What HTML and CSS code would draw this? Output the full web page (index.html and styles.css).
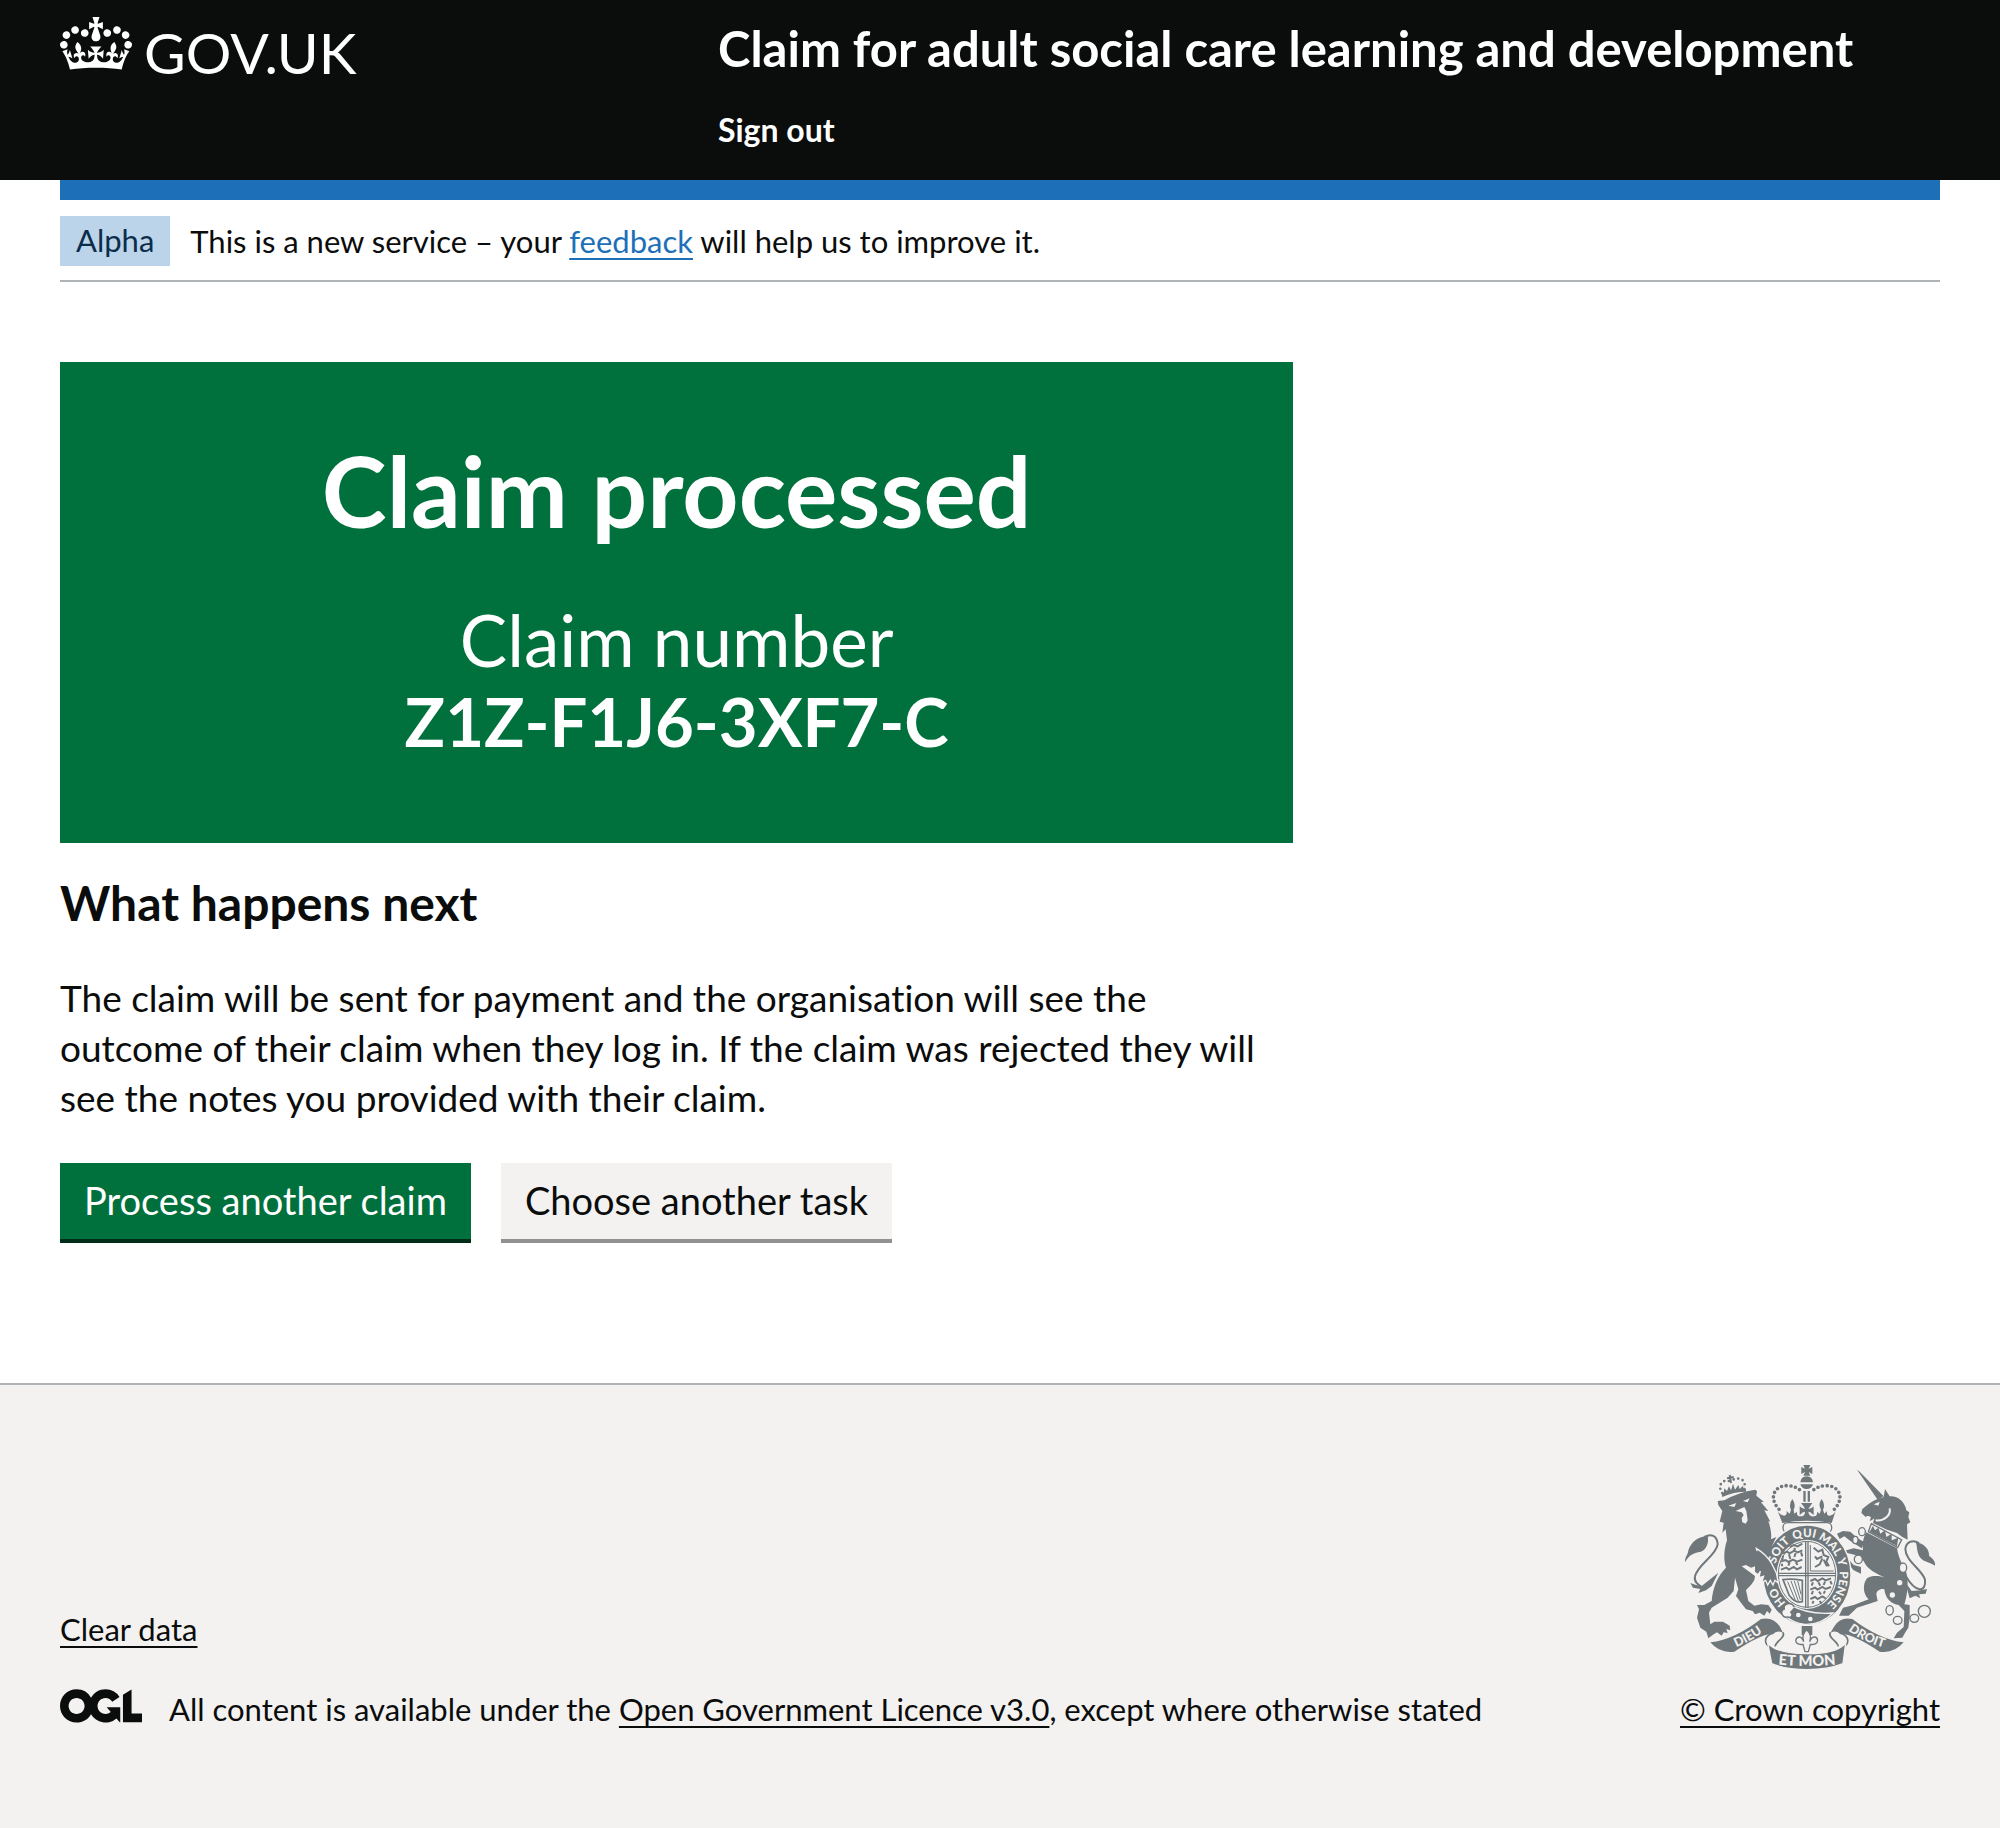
FILE: index.html
```html
<!DOCTYPE html>
<html lang="en">
<head>
<meta charset="utf-8">
<meta name="viewport" content="width=device-width, initial-scale=1">
<title>Claim processed</title>
<link rel="stylesheet" href="styles.css">
</head>
<body>
<header class="header">
  <div class="header-container">
    <a class="logo" href="#">
      <svg class="logo-crown" viewBox="0 0 132 97" aria-hidden="true"><path fill="currentColor" fill-rule="evenodd" d="M25 30.2c3.5 1.5 7.7-.2 9.1-3.7 1.5-3.6-.2-7.8-3.9-9.2-3.6-1.4-7.6.3-9.1 3.9-1.4 3.5.3 7.5 3.9 9zM9 39.5c3.6 1.5 7.8-.2 9.2-3.7 1.5-3.6-.2-7.8-3.9-9.1-3.6-1.5-7.6.2-9.1 3.8-1.4 3.5.3 7.5 3.8 9zM4.4 57.2c3.5 1.5 7.7-.2 9.1-3.8 1.5-3.6-.2-7.7-3.9-9.1-3.5-1.5-7.6.3-9.1 3.8-1.4 3.5.3 7.6 3.9 9.1zm38.3-21.4c3.5 1.5 7.7-.2 9.1-3.8 1.5-3.6-.2-7.7-3.9-9.1-3.6-1.5-7.6.3-9.1 3.8-1.3 3.6.4 7.7 3.9 9.1zm64.4-5.6c-3.6 1.5-7.8-.2-9.1-3.7-1.5-3.6.2-7.8 3.8-9.2 3.6-1.4 7.7.3 9.2 3.9 1.3 3.5-.4 7.5-3.9 9zm15.9 9.3c-3.6 1.5-7.7-.2-9.1-3.7-1.5-3.6.2-7.8 3.7-9.1 3.6-1.5 7.7.2 9.2 3.8 1.5 3.5-.3 7.5-3.8 9zm4.7 17.7c-3.6 1.5-7.8-.2-9.2-3.8-1.5-3.6.2-7.7 3.9-9.1 3.6-1.5 7.7.3 9.2 3.8 1.3 3.5-.4 7.6-3.9 9.1zM89.3 35.8c-3.6 1.5-7.8-.2-9.2-3.8-1.4-3.6.2-7.7 3.9-9.1 3.6-1.5 7.7.3 9.2 3.8 1.4 3.6-.3 7.7-3.9 9.1zM69.7 17.7l8.9 4.7V9.3l-8.9 2.8c-.2-.3-.5-.6-.9-.9L72.4 0H59.6l3.5 11.2c-.3.3-.6.5-.9.9l-8.8-2.8v13.1l8.8-4.7c.3.3.6.7.9.9l-5 15.4v.1c-.2.8-.4 1.6-.4 2.4 0 4.1 3.1 7.5 7 8.1h.2c.3 0 .7.1 1 .1.4 0 .7 0 1-.1h.2c4-.6 7.1-4.1 7.1-8.1 0-.8-.1-1.7-.4-2.4V34l-5.1-15.4c.4-.2.7-.6 1-.9zM66 92.8c16.9 0 32.8 1.1 47.1 3.2 4-16.9 8.9-26.7 14-33.5l-9.6-3.4c1 4.9 1.1 7.2 0 10.2-1.5-1.4-3-4.3-4.2-8.7L108.6 76c2.8-2 5-3.2 7.5-3.3-4.4 9.4-10 11.9-13.6 11.2-4.3-.8-6.3-4.6-5.6-7.9 1-4.7 5.7-5.9 8-.5 4.3-8.7-3-11.4-7.6-8.8 7.1-7.2 7.9-13.5 2.1-21.1-8 6.1-8.1 12.3-4.5 20.8-4.7-5.4-12.1-2.5-9.5 6.2 3.4-5.2 7.9-2 7.2 3.1-.6 4.3-6.4 7.8-13.5 7.2-10.3-.9-10.9-8-11.2-13.8 2.5-.5 7.1 1.8 11 7.3L80.2 60c-4.1 4.4-8 5.3-12.3 5.4 1.4-4.4 8-11.6 8-11.6H55.5s6.4 7.2 7.9 11.6c-4.2-.1-8-1-12.3-5.4l1.4 16.4c3.9-5.5 8.5-7.7 10.9-7.3-.3 5.8-.9 12.8-11.1 13.8-7.2.6-12.9-2.9-13.5-7.2-.7-5 3.8-8.3 7.1-3.1 2.7-8.7-4.6-11.6-9.4-6.2 3.7-8.5 3.6-14.7-4.6-20.8-5.8 7.6-5 13.9 2.2 21.1-4.7-2.6-11.9.1-7.7 8.8 2.3-5.5 7.1-4.2 8.1.5.7 3.3-1.3 7.1-5.7 7.9-3.5.7-9-1.8-13.5-11.2 2.5.1 4.7 1.3 7.5 3.3l-4.7-15.4c-1.2 4.4-2.7 7.2-4.3 8.7-1.1-3-.9-5.3 0-10.2l-9.5 3.4c5 6.9 9.9 16.7 14 33.5 14.8-2.1 30.8-3.2 47.7-3.2z"/></svg>
      <span class="logo-text">GOV.UK</span>
    </a>
    <div class="header-content">
      <a class="service-name" href="#">Claim for adult social care learning and development</a>
      <nav aria-label="Account"><a class="nav-link" href="#">Sign out</a></nav>
    </div>
  </div>
</header>

<div class="width-container">
  <div class="phase-banner">
    <strong class="tag">Alpha</strong>
    <span>This is a new service – your <a class="link" href="#">feedback</a> will help us to improve it.</span>
  </div>

  <main class="main">
    <div class="panel">
      <h1 class="panel-title">Claim processed</h1>
      <div class="panel-body">Claim number<br><strong class="claim-number">Z1Z-F1J6-3XF7-C</strong></div>
    </div>
    <h2 class="heading">What happens next</h2>
    <p class="body-text">The claim will be sent for payment and the organisation will see the outcome of their claim when they log in. If the claim was rejected they will see the notes you provided with their claim.</p>
    <div class="button-group">
      <button class="button" type="button">Process another claim</button>
      <button class="button button-secondary" type="button">Choose another task</button>
    </div>
  </main>
</div>

<footer class="footer">
  <div class="footer-container">
    <div class="footer-meta">
      <a class="footer-link" href="#">Clear data</a>
      <div class="licence">
        <svg class="ogl" viewBox="0 0 483 196" aria-hidden="true"><path fill="currentColor" d="M421.5 142.8V.1l-50.7 32.3v161.1h112.4v-50.7zm-122.3-9.6A47.12 47.12 0 0 1 221 97.8c0-26 21.1-47.1 47.1-47.1 16.7 0 31.4 8.7 39.7 21.8l42.7-27.2A97.63 97.63 0 0 0 268.1 0c-36.5 0-68.3 20.1-85.1 49.7A98 98 0 0 0 97.8 0C43.9 0 0 43.9 0 97.8s43.9 97.8 97.8 97.8c36.5 0 68.3-20.1 85.1-49.7a97.76 97.76 0 0 0 149.6 25.4l19.4 22.2h3v-87.8h-80l24.3 27.5zM97.8 145c-26 0-47.1-21.1-47.1-47.1s21.1-47.1 47.1-47.1 47.1 21.1 47.1 47.1S123.8 145 97.8 145"/></svg>
        <span>All content is available under the <a class="footer-link" href="#">Open Government Licence v3.0</a>, except where otherwise stated</span>
      </div>
    </div>
    <div class="copyright">
      <svg class="crest" viewBox="72 72 750 612" aria-hidden="true">
        <defs>
          <path id="garter" d="M438 512A98 112 0 0 1 438 288A98 112 0 0 1 438 512"/>
          <path id="motto-left" d="M206 626Q262 608 322 562"/>
          <path id="motto-right" d="M548 558Q606 606 684 624"/>
          <path id="motto-mid" d="M346 670Q438 680 530 670"/>
        </defs>

        <!-- unicorn -->
        <g transform="translate(528 60)">
          <path class="crest-fill" d="M60 26L68 32 140 106 122 116Z"/>
          <path class="crest-fill" d="M128 112L140 108 144 84 158 106C182 104 204 122 208 148L217 154 214 168 220 184 210 190 212 236 196 228 180 216 150 206 108 186 112 172 104 178 98 180 102 168 92 164 86 168 73 156 76 144C90 134 100 122 128 112Z"/>
          <path class="crest-gap" stroke-width="6" d="M158 142C162 162 142 182 116 178"/>
          <path class="crest-cut" d="M110 130L128 122 124 134Z"/>
          <g class="crest-line" stroke-width="4">
            <ellipse cx="75" cy="212" rx="10" ry="12"/><ellipse cx="158" cy="448" rx="11" ry="14"/><ellipse cx="182" cy="478" rx="13" ry="12"/><ellipse cx="232" cy="472" rx="13" ry="12"/><circle cx="262" cy="451" r="18"/>
          </g>
          <path class="crest-fill" d="M88 214L180 262C184 290 196 310 208 335 215 360 212 400 202 430L218 432 218 470 214 500 206 512 196 530 170 532 180 515 200 498 202 450 185 432C165 430 145 415 142 385 130 382 118 390 118 400L122 420 60 440 35 464 6 464 18 440 50 432 95 415C78 400 76 370 90 352 105 342 130 345 145 350 120 340 90 325 80 300L55 282 30 276 30 290 50 312 72 318 72 338 50 328 18 292 20 270 50 262 78 268C76 250 78 230 88 214Z"/>
          <path class="crest-fill" d="M74 262L40 240 22 226 8 234 0 218 18 210 40 212 60 230 82 244Z"/>
          <path class="crest-line" stroke-width="4" d="M103 188L194 236 182 260 94 212Z"/>
          <path class="crest-fill" d="M98 212L108 194 114 208 124 200 130 218 144 208 148 228 164 218 164 238 184 230 180 256Z"/>
          <path class="crest-line" stroke-width="6" d="M206 345C236 396 268 396 264 356 256 326 205 300 205 264 208 240 228 236 246 246"/>
          <path class="crest-fill" d="M236 244C262 246 278 268 276 284 288 292 296 302 294 314 278 302 262 304 250 290 238 275 242 258 236 244ZM204 362L224 390 250 388 270 384 266 398 246 400 250 412 235 404 218 412Z"/>
          <ellipse class="crest-ring" cx="55" cy="237" rx="8" ry="11"/>
          <ellipse class="crest-ring" cx="64" cy="295" rx="12" ry="13"/>
          <ellipse class="crest-ring" cx="198" cy="320" rx="11" ry="14"/>
          <g class="crest-cut"><circle cx="188" cy="365" r="8"/><circle cx="166" cy="402" r="8"/></g>
        </g>

        <!-- crown -->
        <path class="crest-fill" d="M427 72H448L443 83 454 78V99L443 93 448 104H427L432 93 421 99V78L432 83ZM418 124Q420 106 437 106T456 124ZM418 130H456Q452 144 437 144T418 130ZM427 150H434V182H427ZM440 150H447V182H440ZM420 186H454Q446 198 442 204 452 204 458 196V222Q448 212 442 212 444 228 460 226 470 224 468 212L476 218 480 206Q470 190 482 174 494 190 486 206L490 218 498 210Q496 224 506 224 516 224 524 210L512 246Q437 232 364 246L350 210Q358 224 370 224 380 222 376 210L386 218 390 206Q382 190 394 174 406 190 398 206L400 218 408 212Q406 226 418 226 432 226 432 212 426 212 416 222V196Q424 204 432 204 430 198 420 186Z"/>
        <path class="crest-line crest-beads" stroke-width="11" d="M354 205C320 168 342 132 382 134Q406 136 420 150M520 205C554 168 532 132 492 134Q468 136 454 150"/>
        <rect class="crest-line" stroke-width="4" x="366" y="245" width="146" height="30" rx="14"/>

        <!-- garter and shield -->
        <ellipse class="crest-disc" cx="438" cy="402" rx="132" ry="150"/>
        <ellipse class="crest-cut" cx="438" cy="400" rx="91" ry="104"/>
        <ellipse class="crest-line" stroke-width="3" cx="438" cy="400" rx="86" ry="99"/>
        <path class="crest-line" stroke-width="4" d="M434 302V500M441 302V500M352 397H524M352 404H524"/>
        <path class="crest-line" stroke-width="3" d="M448 312V390H518"/>
        <path class="crest-line" stroke-width="6" d="M364 338l14-6 8 5 14-8 10 5 14-6M366 344l-2 14M384 340l4 14M404 336l-4 12M420 334l4 12M358 362l16-5 8 6 14-7 12 6 16-6M362 368l2 8M386 364l-4 10M404 364l6 8M360 386l16-6 8 6 14-8 10 7 14-7M386 318l12-6 12 4 14-8M398 322l6 4M448 420l14-6 8 6 14-8 10 6 16-6M456 424l-4 10M472 424l6 10M492 422l-4 10M508 420l4 10M448 446l14-6 8 6 14-8 10 6 16-6M456 450l-4 10M474 452l6 8M492 450l-4 8M448 474l14-6 8 6 14-8 10 6M458 480l-4 8M476 480l6 8M458 320l14 12 12-6 4 16 14 6-6 14 8 14M484 346l-16 8-6-8M484 352l-8 18-14 8M488 356l10 20"/>
        <path class="crest-line" stroke-width="5" d="M366 416Q390 412 424 418V482Q402 488 384 462 378 446 366 416Z"/>
        <path class="crest-line" stroke-width="3" d="M380 422L404 480M390 420L412 480M400 420L418 476M410 420L420 460"/>
        <g class="crest-motto crest-motto-garter">
          <text><textPath href="#garter" startOffset="98">HO</textPath></text>
          <text><textPath href="#garter" startOffset="236">SOIT</textPath></text>
          <text><textPath href="#garter" startOffset="322">QUI</textPath></text>
          <text><textPath href="#garter" startOffset="402">MAL</textPath></text>
          <text><textPath href="#garter" startOffset="460">Y</textPath></text>
          <text><textPath href="#garter" startOffset="540">PENSE</textPath></text>
        </g>
        <path class="crest-disc" d="M386 490Q440 522 516 516 480 552 432 550 396 546 372 524Z"/>
        <g class="crest-cut"><circle cx="412" cy="522" r="7"/><circle cx="448" cy="534" r="7"/></g>
        <path class="crest-ring" d="M400 498C390 480 366 488 370 504 356 508 362 532 380 528 392 532 398 520 388 512"/>

        <!-- lion -->
        <g transform="translate(60 60)">
          <path class="crest-fill" d="M110 120L130 118Q175 92 222 86L228 90 226 104 248 122 240 124 262 150 250 148 268 182 262 180C270 205 272 220 270 235L286 228 276 248 258 290 250 330 238 330 230 338 222 332 222 316 210 320 195 312 182 316 205 332 222 345C222 365 205 375 195 388L202 420 220 434 240 430 262 432 272 446 266 458 258 450 250 464 236 455 222 460 215 450 195 445 180 425 165 405 172 385 162 350 158 390 140 410 92 440 84 455 88 490 100 482 126 482 146 494 148 508 136 504 140 516 128 514 122 524 108 514 98 520 82 532 76 512 58 500 48 470 54 445 48 432 70 432 92 420C95 380 110 345 135 320 125 290 130 250 146 220L138 238 134 205 124 215 128 185 116 182 124 150 112 132Z"/>
          <path class="crest-fill" d="M80 226C85 245 75 268 60 272 35 275 22 285 12 304 12 285 22 280 22 268 30 245 50 225 80 226ZM28 366L45 372 62 375 112 335 92 375 75 388 52 396 58 384 36 380Z"/>
          <path class="crest-line" stroke-width="6" d="M62 378C50 370 38 362 42 346 50 310 105 285 110 250 108 222 90 218 70 228"/>
          <path class="crest-cut" d="M142 134L166 126 160 138ZM186 120L206 112 200 124ZM164 150L190 138 196 150 200 178 194 188 184 184 182 172 188 162 182 154Z"/>
          <path class="crest-disc" d="M226 262Q256 280 272 308L286 336 292 366 282 358 276 372 268 358 260 372 254 358 242 364 248 346 234 350 238 330Z"/>
          <path class="crest-fill" d="M224 268L240 278 246 330 228 330Z"/>
          <path class="crest-fill" d="M122 98Q156 82 194 84L196 92Q158 92 124 108ZM128 96L130 82 138 90 144 76 150 88 156 68 162 86 172 72 176 84 186 74 188 86Z"/>
          <path class="crest-line crest-beads" stroke-width="8" d="M124 96C108 74 124 54 144 60M190 84C196 60 180 46 156 56"/>
          <path class="crest-line" stroke-width="6" d="M146 42L150 66M138 52L158 48"/>
        </g>

        <!-- fleur-de-lis -->
        <path class="crest-fill" d="M422 555H454V582H422Z"/>
        <path class="crest-ring" d="M437 566C452 580 450 592 446 602 452 584 468 584 470 598 470 608 458 612 448 610L442 632H432L426 610C416 612 404 608 404 598 408 584 422 584 428 602 424 592 424 580 437 566Z"/>

        <!-- scroll -->
        <path class="crest-fill" d="M148 604Q220 596 300 534 336 526 356 556L366 576Q348 566 336 580 306 574 220 632 176 638 148 604ZM728 604Q656 596 574 534 538 526 520 556L508 576Q526 566 538 580 570 574 656 632 700 638 728 604Z"/>
        <path class="crest-line" stroke-width="5" d="M334 576C308 588 308 606 328 620M366 574C374 592 346 598 342 616M540 576C566 588 566 606 546 620M508 574C500 592 528 598 532 616"/>
        <path class="crest-disc" d="M320 606Q348 638 438 638T554 606L546 668Q500 686 438 686T332 668Z"/>
        <g class="crest-motto">
          <text><textPath href="#motto-left" startOffset="50%">DIEU</textPath></text>
          <text><textPath href="#motto-right" startOffset="50%">DROIT</textPath></text>
          <text class="crest-motto-large"><textPath href="#motto-mid" startOffset="50%">ET MON</textPath></text>
        </g>
      </svg>
      <a class="footer-link" href="#">© Crown copyright</a>
    </div>
  </div>
</footer>
</body>
</html>
```

FILE: styles.css
```css
* {
  box-sizing: border-box;
}

body {
  margin: 0;
  background: #f3f2f1;
  color: #0b0c0c;
  font-family: Lato, "Liberation Sans", sans-serif;
  font-size: 31px;
  font-variant-ligatures: none;
  line-height: 40px;
}

a {
  color: inherit;
  text-decoration: none;
}

/* Header */
.header {
  background: #0b0c0c;
  color: #fff;
}

.header-container {
  display: grid;
  grid-template-columns: 35% 65%;
  margin: 0 60px;
  min-height: 180px;
}

.logo {
  display: flex;
  align-items: flex-start;
  gap: 12px;
  padding-top: 17px;
}

.logo-crown {
  width: 72px;
  height: 53px;
}

.logo-text {
  font-size: 57px;
  line-height: 70px;
}

.header-content {
  display: flex;
  flex-direction: column;
  gap: 22px;
  padding-top: 18px;
}

.service-name {
  font-size: 49px;
  font-weight: 700;
  line-height: 60px;
}

.nav-link {
  font-size: 32px;
  font-weight: 700;
  line-height: 60px;
}

/* Phase banner */
.width-container {
  padding: 0 60px;
  background: #fff;
}

.phase-banner {
  display: flex;
  align-items: center;
  gap: 20px;
  padding: 16px 0 14px;
  border-top: 20px solid #1d70b8;
  border-bottom: 2px solid #b1b4b6;
}

.tag {
  padding: 4px 16px 6px;
  background: #bbd4ea;
  color: #0c2d4a;
  font-weight: 400;
}

.link,
.footer-link {
  text-decoration: underline;
  text-decoration-thickness: 2px;
  text-underline-offset: 5px;
  text-decoration-skip-ink: none;
}

.link {
  color: #1d70b8;
}

/* Main */
.main {
  width: calc(66.666% - 20px);
  padding: 80px 0 144px;
}

.panel {
  margin-bottom: 30px;
  padding: 78px 80px 82px;
  background: #00703c;
  color: #fff;
  text-align: center;
}

.panel-title {
  margin: 0 0 60px;
  font-size: 98px;
  line-height: 100px;
}

.panel-body {
  font-size: 71px;
  line-height: 80px;
}

.claim-number {
  font-size: 67px;
}

.heading {
  margin: 0 0 40px;
  font-size: 48px;
  line-height: 60px;
}

.body-text {
  margin: 0 0 40px;
  font-size: 37px;
  line-height: 50px;
}

.button-group {
  display: flex;
  gap: 30px;
}

.button {
  padding: 18px 24px 20px;
  border: 0;
  background: #00703c;
  box-shadow: 0 4px 0 #002d18;
  color: #fff;
  font: inherit;
  font-size: 38px;
  line-height: 38px;
}

.button-secondary {
  background: #f3f2f1;
  box-shadow: 0 4px 0 #929191;
  color: #0b0c0c;
}

/* Footer */
.footer {
  border-top: 2px solid #b1b4b6;
}

.footer-container {
  display: flex;
  align-items: flex-end;
  justify-content: space-between;
  padding: 80px 60px 100px;
}

.footer-meta {
  display: flex;
  flex-direction: column;
  gap: 40px;
}

.licence {
  display: flex;
  align-items: flex-start;
  gap: 27px;
}

.ogl {
  width: 82px;
  height: 34px;
}

.copyright {
  display: flex;
  flex-direction: column;
  align-items: center;
  gap: 20px;
}

.crest {
  width: 250px;
  height: 204px;
}

.crest-fill,
.crest-disc {
  fill: #6f777b;
}

.crest-disc {
  stroke: #f3f2f1;
  stroke-width: 4px;
}

.crest-cut {
  fill: #f3f2f1;
}

.crest-line {
  fill: none;
  stroke: #6f777b;
}

.crest-gap {
  fill: none;
  stroke: #f3f2f1;
}

.crest-beads {
  stroke-dasharray: 0 14;
  stroke-linecap: round;
}

.crest-ring {
  fill: #f3f2f1;
  stroke: #6f777b;
  stroke-width: 4px;
}

.crest-motto {
  fill: #f3f2f1;
  font-size: 38px;
  font-weight: 900;
  text-anchor: middle;
}

.crest-motto-garter {
  font-size: 35px;
}

.crest-motto-large {
  font-size: 44px;
}
```
